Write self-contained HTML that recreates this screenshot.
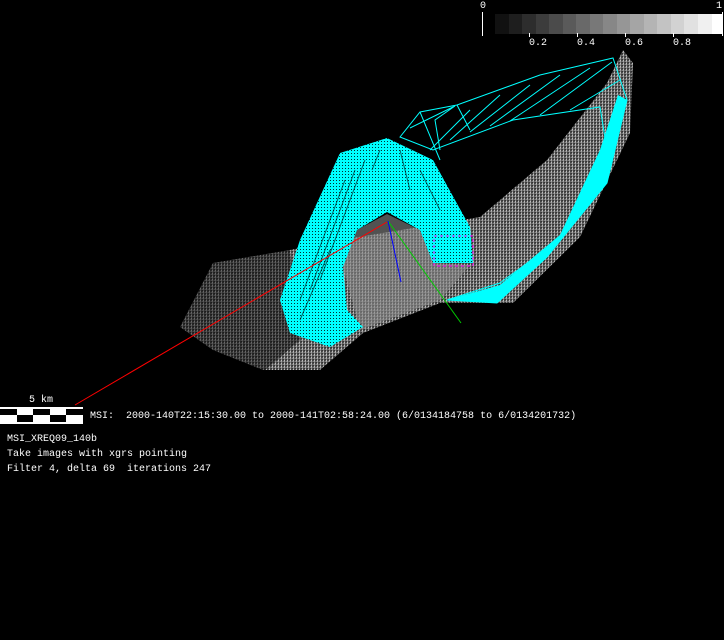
<!DOCTYPE html>
<html><head><style>
html,body{margin:0;padding:0;background:#000;width:724px;height:640px;overflow:hidden}
.t{position:absolute;font-family:"Liberation Mono",monospace;font-size:10px;color:#fff;white-space:pre;line-height:12px}
</style></head><body>
<svg width="724" height="640" style="position:absolute;left:0;top:0">
<defs>
<linearGradient id="g" x1="0" y1="1" x2="1" y2="0">
<stop offset="0" stop-color="#222"/><stop offset="0.35" stop-color="#666"/><stop offset="0.7" stop-color="#aaa"/><stop offset="1" stop-color="#ddd"/>
</linearGradient>
<pattern id="p" width="3" height="3" patternUnits="userSpaceOnUse"><rect width="3" height="3" fill="url(#g)"/><rect width="2" height="1" fill="#000" opacity=".5"/><rect y="2" x="1" width="1" height="1" fill="#000" opacity=".5"/></pattern>
<pattern id="c" width="3" height="3" patternUnits="userSpaceOnUse"><rect width="3" height="3" fill="#0ff"/><rect width="1" height="1" fill="#000" opacity=".8"/></pattern>
</defs>
<g>
<rect x="495" y="14" width="14" height="20" fill="#111"/><rect x="509" y="14" width="13" height="20" fill="#1e1e1e"/><rect x="522" y="14" width="14" height="20" fill="#2d2d2d"/><rect x="536" y="14" width="13" height="20" fill="#3c3c3c"/><rect x="549" y="14" width="14" height="20" fill="#4b4b4b"/><rect x="563" y="14" width="13" height="20" fill="#5a5a5a"/><rect x="576" y="14" width="14" height="20" fill="#696969"/><rect x="590" y="14" width="13" height="20" fill="#787878"/><rect x="603" y="14" width="14" height="20" fill="#878787"/><rect x="617" y="14" width="13" height="20" fill="#969696"/><rect x="630" y="14" width="14" height="20" fill="#a5a5a5"/><rect x="644" y="14" width="13" height="20" fill="#b4b4b4"/><rect x="657" y="14" width="14" height="20" fill="#c3c3c3"/><rect x="671" y="14" width="13" height="20" fill="#d2d2d2"/><rect x="684" y="14" width="14" height="20" fill="#e1e1e1"/><rect x="698" y="14" width="14" height="20" fill="#f0f0f0"/><rect x="712" y="14" width="10" height="20" fill="#fff"/>
<line x1="482.5" y1="12" x2="482.5" y2="36" stroke="#fff"/><line x1="722.5" y1="12" x2="722.5" y2="36" stroke="#fff"/>
<g stroke="#fff"><line x1="529.5" y1="33" x2="529.5" y2="37"/><line x1="577.5" y1="33" x2="577.5" y2="37"/><line x1="625.5" y1="33" x2="625.5" y2="37"/><line x1="673.5" y1="33" x2="673.5" y2="37"/></g>
</g>
<!-- gray body -->
<path d="M180,327 L213,263 L290,250 L340,240 L480,217 L547,160 L607,83 L623,50 L633,63 L630,133 L580,237 L513,303 L440,303 L363,333 L320,370 L263,370 L213,350 Z" fill="url(#p)"/>
<path d="M175,330 L213,263 L290,250 L300,340 L263,372 L213,352 Z" fill="#000" opacity=".45"/>
<path d="M343,267 L357,230 L387,214 L420,230 L433,263 L470,265 L440,300 L360,330 Z" fill="#888" opacity=".6"/>
<!-- cyan band -->
<path d="M400,137 L420,112 L457,105 L540,75 L613,58 L627,100 L607,183 L547,257 L497,303 L447,300 L500,283 L563,237 L607,150 L600,107 L513,120 L433,150 Z" fill="none" stroke="#0ff" stroke-width="1"/>
<path d="M447,300 L497,303 L547,257 L607,183 L627,100 L618,95 L600,150 L560,235 L500,285 Z" fill="#0ff"/>
<g stroke="#0ff" stroke-width="1" fill="none">
<path d="M430,150 L470,110 M450,140 L500,95 M470,132 L530,85 M490,126 L560,75 M510,121 L590,68 M540,115 L612,62 M570,110 L620,80 M420,112 L440,160 M457,105 L470,130"/>
<path d="M410,128 L455,106 L435,120 L440,150"/>
</g>
<!-- cyan arch -->
<path d="M280,300 L300,240 L340,153 L387,138 L433,160 L455,200 L470,227 L473,263 L433,263 L420,230 L387,212 L357,230 L343,267 L347,310 L363,327 L330,347 L290,333 Z" fill="url(#c)"/>
<g stroke="#000" stroke-width="1" opacity=".6">
<path d="M300,300 L345,180 M310,290 L355,170 M320,280 L365,160 M372,170 L380,150 M400,150 L410,190 M420,170 L440,210 M300,320 L330,250"/>
</g>
<rect x="434" y="236" width="39" height="30" fill="none" stroke="#f0f" stroke-dasharray="3,3"/>
<line x1="75" y1="405" x2="387" y2="222" stroke="#f00"/>
<line x1="388" y1="221" x2="461" y2="323" stroke="#0c0"/>
<line x1="388" y1="221" x2="401" y2="282" stroke="#00f"/>
<rect x="0" y="407" width="83" height="17" fill="#fff"/>
<g fill="#000"><rect x="0" y="409" width="17" height="6"/><rect x="33" y="409" width="17" height="6"/><rect x="66" y="409" width="17" height="6"/><rect x="17" y="415" width="16" height="7"/><rect x="50" y="415" width="16" height="7"/></g>
</svg>
<div class="t" style="left:480px;top:1px">0</div>
<div class="t" style="left:716px;top:1px">1</div>
<div class="t" style="left:529px;top:38px">0.2</div>
<div class="t" style="left:577px;top:38px">0.4</div>
<div class="t" style="left:625px;top:38px">0.6</div>
<div class="t" style="left:673px;top:38px">0.8</div>
<div class="t" style="left:29px;top:395px">5 km</div>
<div class="t" style="left:90px;top:411px">MSI:  2000-140T22:15:30.00 to 2000-141T02:58:24.00 (6/0134184758 to 6/0134201732)</div>
<div class="t" style="left:7px;top:434px">MSI_XREQ09_140b</div>
<div class="t" style="left:7px;top:449px">Take images with xgrs pointing</div>
<div class="t" style="left:7px;top:464px">Filter 4, delta 69  iterations 247</div>
</body></html>
